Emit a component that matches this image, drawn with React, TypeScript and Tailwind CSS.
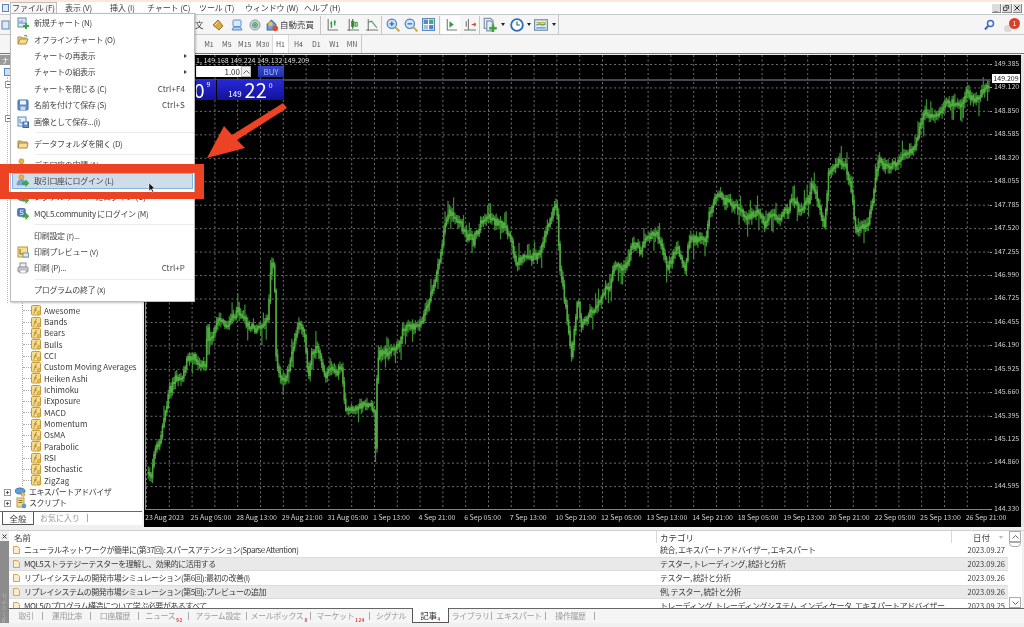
import React, { useMemo } from "react";

const FONT = "font-['Noto_Sans_CJK_JP','Noto_Sans',sans-serif]";

const LZ: number[][] = [[10,850],[18,860],[30,780],[45,750],[55,690],[65,660],[72,590],[78,600],[90,560],[110,570],[125,510],[145,500],[170,520],[182,530],[186,400],[195,440],[215,400],[225,380],[245,400],[262,380],[285,370],[300,390],[330,410],[350,415],[370,370],[378,210],[388,230],[392,480],[400,550],[412,575],[430,550],[445,470],[462,410],[480,430],[490,570],[500,490],[515,460],[540,540],[560,530],[590,530],[600,640],[612,670],[640,650],[660,640],[688,670],[689,900],[697,500],[705,480],[735,490],[765,465],[775,410],[800,400],[830,395],[850,340],[870,270],[885,190],[900,100],[915,65],[940,100],[965,140],[985,150],[1005,100],[1025,80],[1045,80],[1075,120],[1100,170],[1110,220],[1135,190],[1150,200],[1175,200],[1200,130],[1220,60],[1235,40],[1245,230],[1255,290],[1270,420],[1280,500]];
const RZ: number[][] = [[15,760],[30,900],[50,720],[60,800],[100,760],[120,720],[150,660],[165,600],[190,620],[215,550],[240,570],[262,530],[290,530],[320,620],[350,560],[372,620],[385,530],[435,530],[445,450],[465,415],[510,430],[545,470],[600,470],[610,490],[630,450],[660,460],[695,430],[715,445],[745,410],[752,360],[790,490],[803,330],[825,290],[850,300],[870,380],[885,520],[920,500],[935,420],[950,300],[985,320],[1025,285],[1055,280],[1085,160],[1130,160],[1155,130],[1200,140],[1215,105],[1240,120],[1275,75]];
const KEYS: number[][] = [
  ...LZ.map(([x, y]) => [144 + x / 3 - 145, 190 + y / 3 - 55]),
  ...RZ.map(([x, y]) => [560 + x / 3 - 145, 60 + y / 3 - 55]),
];

function buildCandles() {
  let seed = 12345;
  const rnd = () => {
    seed = (seed * 1103515245 + 12345) & 0x7fffffff;
    return seed / 0x7fffffff;
  };
  const at = (x: number) => {
    for (let i = 1; i < KEYS.length; i++) {
      if (x <= KEYS[i][0]) {
        const [x0, y0] = KEYS[i - 1];
        const [x1, y1] = KEYS[i];
        const t = x1 === x0 ? 1 : (x - x0) / (x1 - x0);
        return y0 + (y1 - y0) * t;
      }
    }
    return KEYS[KEYS.length - 1][1];
  };
  let wick = "";
  let body = "";
  let prev = at(KEYS[0][0]);
  let drift = 0;
  for (let x = KEYS[0][0]; x <= 843; x += 1.42) {
    drift = drift * 0.8 + (rnd() - 0.5) * 5;
    const c = at(x) + drift + (rnd() - 0.5) * 5;
    const spike = rnd();
    const up = 2 + rnd() * 5 + (spike > 0.92 ? 9 : 0);
    const dn = 2 + rnd() * 5 + (spike < 0.08 ? 11 : 0);
    const top = Math.min(prev, c) - up;
    const bot = Math.max(prev, c) + dn;
    wick += `M${x.toFixed(1)} ${top.toFixed(1)}V${bot.toFixed(1)}`;
    body += `M${x.toFixed(1)} ${(Math.min(prev, c) - 1).toFixed(1)}V${(Math.max(prev, c) + 1).toFixed(1)}`;
    prev = c;
  }
  return { wick, body };
}

const PRICES = ["149.385","149.120","148.850","148.585","148.320","148.055","147.785","147.520","147.255","146.990","146.725","146.455","146.190","145.925","145.660","145.395","145.125","144.860","144.595","144.330"];
const TIMES = ["23 Aug 2023","25 Aug 05:00","28 Aug 13:00","29 Aug 21:00","31 Aug 05:00","1 Sep 13:00","4 Sep 21:00","6 Sep 05:00","7 Sep 13:00","10 Sep 21:00","12 Sep 05:00","13 Sep 13:00","14 Sep 21:00","18 Sep 05:00","19 Sep 13:00","20 Sep 21:00","22 Sep 05:00","25 Sep 13:00","26 Sep 21:00"];
const TFS = ["M1","M5","M15","M30","H1","H4","D1","W1","MN"];
const INDICATORS = ["Awesome","Bands","Bears","Bulls","CCI","Custom Moving Averages","Heiken Ashi","Ichimoku","iExposure","MACD","Momentum","OsMA","Parabolic","RSI","Stochastic","ZigZag"];

function Svg({ s = 12, children }: { s?: number; children: React.ReactNode }) {
  return <svg width={s} height={s} viewBox="0 0 12 12" className="shrink-0">{children}</svg>;
}

const IcNewChart = () => <Svg><rect x="1" y="1" width="8" height="9" fill="#dfeaf7" stroke="#5a86b8"/><path d="M3 7V4M5 7V3M7 7V5" stroke="#5a86b8"/><path d="M9 6v6M6 9h6" stroke="#3aa63a" strokeWidth="2"/></Svg>;
const IcFolderOpen = () => <Svg><path d="M1 10V3h3l1 1h4v2" fill="#f2d58a" stroke="#b08a3a"/><path d="M1 10l2-5h8l-2 5z" fill="#f7dc8e" stroke="#b08a3a"/><path d="M7 2l2-1 1 2" stroke="#3aa63a" fill="none"/></Svg>;
const IcFolder = () => <Svg><path d="M1 10V3h3l1 1h5v1" fill="#eccb7c" stroke="#a98a45"/><path d="M1 10l1-5h9l-1 5z" fill="#f6dd9a" stroke="#a98a45"/></Svg>;
const IcSave = () => <Svg><rect x="1" y="1" width="10" height="10" rx="1" fill="#5f8fc9" stroke="#3e6aa3"/><rect x="3" y="1.5" width="6" height="4" fill="#eef3fa"/><rect x="3.5" y="7.5" width="5" height="3.5" fill="#c9d7e8"/></Svg>;
const IcSaveImg = () => <Svg><rect x="1" y="1" width="8" height="9" fill="#e8f0fa" stroke="#5a86b8"/><path d="M3 3v4h3" stroke="#5a86b8" fill="none"/><rect x="6" y="6" width="5.5" height="5.5" fill="#5f8fc9" stroke="#3e6aa3"/><rect x="7.5" y="6.5" width="2.5" height="2" fill="#fff"/></Svg>;
const Person = ({ c = "#e8b24a" }: { c?: string }) => <><circle cx="5" cy="3" r="2.3" fill={c} stroke="#b5832a" strokeWidth=".5"/><path d="M1 10c0-3.5 1.5-4.5 4-4.5s4 1 4 4.5z" fill="#6fa9d8" stroke="#4f7fae" strokeWidth=".5"/></>;
const Green = () => <path d="M6 7.5h3V5.5l3 3-3 3V9.5H6z" fill="#3fae3f" stroke="#2a8a2a" strokeWidth=".4"/>;
const IcLogin = () => <Svg s={13}><Person/><Green/></Svg>;
const IcSignal = () => <Svg s={13}><circle cx="5" cy="5" r="4" fill="#4f87c9" stroke="#38689f" strokeWidth=".5"/><Green/></Svg>;
const IcMql = () => <Svg s={13}><rect x="1" y="1" width="8" height="8" rx="2" fill="#4f78b8"/><path d="M4 3h3M4 3v2h2.5v2H3.5" stroke="#fff" fill="none" strokeWidth=".7"/><Green/></Svg>;
const IcPreview = () => <Svg><rect x="1" y="1" width="9.5" height="10" fill="#f5df8c" stroke="#b59a3f"/><path d="M3 3v5h5" stroke="#7a6a30" fill="none"/><rect x="6" y="7" width="5.5" height="4" fill="#dfe8f2" stroke="#7f93a8"/></Svg>;
const IcPrint = () => <Svg><rect x="3" y="1" width="6" height="5" fill="#f0f0f0" stroke="#8c8c8c"/><rect x="1" y="5" width="10" height="5" rx="1" fill="#c9ced6" stroke="#8c8c8c"/><rect x="3" y="8" width="6" height="3" fill="#fff" stroke="#8c8c8c" strokeWidth=".6"/></Svg>;
const IcDiamond = () => <Svg><path d="M1 6l5-5 5 6-4 4z" fill="#d8aa4e" stroke="#9a7425"/><path d="M3 6l3-3" stroke="#f5dc9a"/></Svg>;
const IcMonitor = () => <Svg><rect x="2" y="1" width="8" height="6.5" rx="1" fill="#dcebfa" stroke="#5d8fc6"/><path d="M1 11l1.5-3h7L11 11z" fill="#b6cfe8" stroke="#5d8fc6"/></Svg>;
const IcRadar = () => <Svg><circle cx="6" cy="6" r="5" fill="#cfd6dd" stroke="#8a97a3"/><circle cx="6" cy="6" r="2.5" fill="#8fc98a" stroke="#5a9a55"/><circle cx="6" cy="6" r="1" fill="#3c8ecf"/></Svg>;
const IcRobot = () => <Svg s={13}><path d="M2 6l4-4 4 4v5H2z" fill="#6da3d8" stroke="#3e6fa3"/><circle cx="5" cy="5.5" r="2" fill="#f0c04a"/><circle cx="9.5" cy="9.5" r="2.6" fill="#e24a32"/></Svg>;
const IcBars = () => <Svg s={13}><path d="M2 1v10h9" stroke="#777" fill="none"/><path d="M5 3v6M8 2v5" stroke="#2f9a4f" strokeWidth="1.3"/><path d="M4 5h1M8 4h1" stroke="#2f9a4f"/></Svg>;
const IcCandle = () => <Svg s={13}><path d="M1 11h11M3 1v11" stroke="#777"/><rect x="5" y="3" width="2.5" height="5" fill="#4aa64a" stroke="#2a7a2a" strokeWidth=".5"/><path d="M6.2 1v9" stroke="#2a7a2a"/><rect x="8.5" y="4" width="2" height="4" fill="#9ad09a" stroke="#2a7a2a" strokeWidth=".5"/></Svg>;
const IcLine = () => <Svg s={13}><path d="M1 11h11M3 1v11" stroke="#777"/><path d="M3 4l3-1 5 6" stroke="#3a9a5a" fill="none"/></Svg>;
const IcZoomIn = () => <Svg s={14}><circle cx="5" cy="5" r="4" fill="#cfe3f7" stroke="#4a82bd"/><path d="M3 5h4M5 3v4" stroke="#2f6fb3" strokeWidth="1.1"/><path d="M8 8l3.5 3.5" stroke="#d6a93e" strokeWidth="1.8"/></Svg>;
const IcZoomOut = () => <Svg s={14}><circle cx="5" cy="5" r="4" fill="#cfe3f7" stroke="#4a82bd"/><path d="M3 5h4" stroke="#2f6fb3" strokeWidth="1.1"/><path d="M8 8l3.5 3.5" stroke="#d6a93e" strokeWidth="1.8"/></Svg>;
const IcTile = () => <Svg s={13}><rect x="0.5" y="0.5" width="11" height="11" fill="#fff" stroke="#5a86b8"/><rect x="1.5" y="1.5" width="4" height="4" fill="#4f87c9"/><rect x="6.5" y="1.5" width="4" height="4" fill="#4aa670"/><rect x="1.5" y="6.5" width="4" height="4" fill="#9dc0e4"/><rect x="6.5" y="6.5" width="4" height="4" fill="#4f87c9"/></Svg>;
const IcShift = () => <Svg s={13}><path d="M3 1v10h9" stroke="#777" fill="none"/><path d="M5 3l4 3-4 3z" fill="#2f9a4f"/></Svg>;
const IcAuto = () => <Svg s={13}><path d="M5 1v10M1 11h11" stroke="#777"/><path d="M8 6h3M10 4.5L12 6l-2 1.5" stroke="#c9503a" fill="none"/><path d="M3 3v5" stroke="#777"/></Svg>;
const IcNew = () => <Svg s={15}><path d="M1 1h5l2 2v6H1z" fill="#f5f5f5" stroke="#7f93a8"/><path d="M3 3h3l2 2v6H3z" fill="#e5ecf5" stroke="#7f93a8"/><path d="M8 6v6M5 9h6" stroke="#3aa63a" strokeWidth="2"/></Svg>;
const IcClock = () => <Svg s={14}><circle cx="6" cy="6" r="5" fill="#fff" stroke="#2f6fb3" strokeWidth="1.6"/><path d="M6 3v3h2.5" stroke="#2f5f93" fill="none"/></Svg>;
const IcTemplate = () => <Svg s={14}><rect x="0.5" y="1.5" width="11" height="9" fill="#dfe9f4" stroke="#6f8fb0"/><path d="M2 4h8" stroke="#d9a54a"/><path d="M2 6l3-1 2 1 3-1" stroke="#4aa64a" fill="none"/><path d="M2 8.5h8" stroke="#5a86b8"/></Svg>;
const IcSearch = () => <Svg><circle cx="7.5" cy="4.5" r="3" fill="none" stroke="#3f6fc4" strokeWidth="1.5"/><path d="M5.5 6.5L2 10.5" stroke="#3f6fc4" strokeWidth="2"/></Svg>;
const IcIndicator = () => <svg width="11" height="11" viewBox="0 0 11 11" className="shrink-0"><rect x="0.5" y="0.5" width="9" height="9.5" rx="1" fill="#f4dc8c" stroke="#c49a3e"/><path d="M6 2.5C4.5 2 4.5 4 4 6S3 8.5 2.3 8M3 5h3" stroke="#8a6a20" fill="none" strokeWidth=".7"/><circle cx="8" cy="8" r="1.8" fill="#efb840" stroke="#b9862a" strokeWidth=".5"/></svg>;
const IcEa = () => <Svg><ellipse cx="5" cy="5" rx="5" ry="3" fill="#5e9ed8" stroke="#3f74aa"/><circle cx="8" cy="8.5" r="2" fill="#f0c04a" stroke="#b98a2a" strokeWidth=".5"/></Svg>;
const IcScript = () => <Svg><rect x="2" y="1" width="7" height="9" fill="#f1dd9a" stroke="#b79a45"/><path d="M3.5 3.5h4M3.5 5.5h4" stroke="#8a7a3a"/><circle cx="9" cy="9" r="2" fill="#5e9ed8" stroke="#3f74aa" strokeWidth=".5"/></Svg>;
const IcDoc = () => <svg width="7" height="8" viewBox="0 0 7 8" className="shrink-0"><path d="M.5.5h4l2 2v5h-6z" fill="#fbeccb" stroke="#d9a04e"/></svg>;
const Chev = ({ up }: { up?: boolean }) => <svg width="7" height="4" viewBox="0 0 7 4"><path d={up ? "M.5 3.5l3-3 3 3" : "M.5.5l3 3 3-3"} stroke="#666" fill="none"/></svg>;

const Plus = () => <svg width="7" height="7" viewBox="0 0 7 7" className="shrink-0"><rect x=".5" y=".5" width="6" height="6" fill="#fff" stroke="#999"/><path d="M2 3.5h3M3.5 2v3" stroke="#555"/></svg>;
const Minus = () => <svg width="7" height="7" viewBox="0 0 7 7" className="shrink-0"><rect x=".5" y=".5" width="6" height="6" fill="#fff" stroke="#999"/><path d="M2 3.5h3" stroke="#555"/></svg>;
const Sep = ({ w }: { w: string }) => <div className={`${w} h-[18px] flex justify-center shrink-0`}><span className="w-px h-full bg-[#c4c4c4]" /></div>;
const Drop = ({ w = "w-[8px]" }: { w?: string }) => <div className={`${w} flex justify-center shrink-0`}><span className="w-0 h-0 border-x-[2.5px] border-x-transparent border-t-[3px] border-t-[#222]" /></div>;

function MenuRow({ icon, label, sc, arrow }: { icon?: React.ReactNode; label: string; sc?: string; arrow?: boolean }) {
  return (
    <div className="h-[16.4px] flex items-center relative">
      <div className="w-[23px] flex justify-center shrink-0">{icon}</div>
      <span className="whitespace-nowrap">{label}</span>
      {sc && <span className="ml-auto pr-[9px] tracking-[0.1px]">{sc}</span>}
      {arrow && <span className="ml-auto mr-[7px] w-0 h-0 border-y-[2px] border-y-transparent border-l-[3px] border-l-[#444]" />}
    </div>
  );
}
const MenuSep = ({ h }: { h: string }) => <div className={`${h} flex items-center pl-[24px]`}><span className="h-px w-full bg-[#ececec]" /></div>;

const ROWS = [
  ["ニューラルネットワークが簡単に(第37回):スパースアテンション(Sparse Attention)", "統合, エキスパートアドバイザー, エキスパート", "2023.09.27"],
  ["MQL5ストラテジーテスターを理解し、効果的に活用する", "テスター, トレーディング, 統計と分析", "2023.09.26"],
  ["リプレイシステムの開発市場シミュレーション(第6回):最初の改善(I)", "テスター, 統計と分析", "2023.09.26"],
  ["リプレイシステムの開発市場シミュレーション(第5回):プレビューの追加", "例, テスター, 統計と分析", "2023.09.26"],
  ["MQL5のプログラム構造について学ぶ必要があるすべて", "トレーディング, トレーディングシステム, インディケータ, エキスパートアドバイザー", "2023.09.25"],
];

const TABS: { t: string; s?: string; w: string; active?: boolean; nosep?: boolean }[] = [
  { t: "取引", w: "w-[34px]" },
  { t: "運用比率", w: "w-[48px]" },
  { t: "口座履歴", w: "w-[48px]" },
  { t: "ニュース", s: "92", w: "w-[50px]" },
  { t: "アラーム設定", w: "w-[58px]" },
  { t: "メールボックス", s: "8", w: "w-[64px]" },
  { t: "マーケット", s: "124", w: "w-[59px]" },
  { t: "シグナル", w: "w-[42px]", nosep: true },
  { t: "記事", s: "4", w: "w-[37px]", active: true },
  { t: "ライブラリ", w: "w-[43px]" },
  { t: "エキスパート", w: "w-[54px]" },
  { t: "操作履歴", w: "w-[49px]" },
];

export default function App() {
  const { wick, body } = useMemo(buildCandles, []);
  return (
    <div className={`relative w-[1024px] h-[627px] overflow-hidden bg-[#f0f0f0] text-[#3a3a3a] text-[8px] leading-none ${FONT} blur-[0.4px]`}>
      <div className="h-[2px] bg-[#fde6dc]" />
      {/* menu bar */}
      <div className="h-[12px] bg-white flex items-center text-[8px] whitespace-nowrap tracking-[-0.1px]">
        <div className="w-[10px] pl-[2px] shrink-0"><svg width="7" height="8" viewBox="0 0 7 8"><rect x=".5" y=".5" width="6" height="7" fill="#dfeaf7" stroke="#5a86b8"/></svg></div>
        <div className="w-[47px] h-full border border-[#bdbdbd] bg-[#f7f7f7] flex items-center justify-center shrink-0">ファイル (F)</div>
        <div className="w-[8px] shrink-0" />
        <div className="w-[45px] shrink-0">表示 (V)</div>
        <div className="w-[37px] shrink-0">挿入 (I)</div>
        <div className="w-[52px] shrink-0">チャート (C)</div>
        <div className="w-[46px] shrink-0">ツール (T)</div>
        <div className="w-[59px] shrink-0">ウィンドウ (W)</div>
        <div className="w-[40px] shrink-0">ヘルプ (H)</div>
        <div className="ml-auto flex gap-[1px] pr-[2px]">
          <span className="w-[9.5px] h-[9px] bg-[#dcdcdc] border-b border-r border-[#888] flex items-end justify-center text-[7px] text-[#333]">_</span>
          <span className="w-[9.5px] h-[9px] bg-[#dcdcdc] border-b border-r border-[#888] flex items-center justify-center"><svg width="6" height="6" viewBox="0 0 6 6"><path d="M2 .5h3.5V4M.5 2h3.5v3.5H.5z" stroke="#333" fill="none" strokeWidth=".8"/></svg></span>
          <span className="w-[9.5px] h-[9px] bg-[#dcdcdc] border-b border-r border-[#888] flex items-center justify-center"><svg width="6" height="6" viewBox="0 0 6 6"><path d="M.5.5l5 5M5.5.5l-5 5" stroke="#333"/></svg></span>
        </div>
      </div>
      {/* toolbar 1 */}
      <div className="h-[20px] bg-[#f5f5f5] border-t border-[#c8c8c8] flex items-center text-[8.5px]">
        <div className="w-[191px] pl-[1px] shrink-0"><svg width="9" height="10" viewBox="0 0 9 10"><rect x="1" y="1" width="7" height="8" fill="#dfeaf7" stroke="#5a86b8"/></svg></div>
        <div className="w-[17px] pl-[4px] shrink-0">文</div>
        <div className="w-[19px] flex justify-center shrink-0"><IcDiamond /></div>
        <div className="w-[19px] flex justify-center shrink-0"><IcMonitor /></div>
        <div className="w-[17px] flex justify-center shrink-0"><IcRadar /></div>
        <div className="w-[17px] flex justify-center shrink-0"><IcRobot /></div>
        <div className="w-[38px] shrink-0 whitespace-nowrap">自動売買</div>
        <Sep w="w-[4px]" />
        <div className="w-[20px] flex justify-center shrink-0"><IcBars /></div>
        <div className="w-[20px] flex justify-center shrink-0"><IcCandle /></div>
        <div className="w-[18px] flex justify-center shrink-0"><IcLine /></div>
        <Sep w="w-[3px]" />
        <div className="w-[19px] flex justify-center shrink-0"><IcZoomIn /></div>
        <div className="w-[18px] flex justify-center shrink-0"><IcZoomOut /></div>
        <div className="w-[17px] flex justify-center shrink-0"><IcTile /></div>
        <Sep w="w-[4px]" />
        <div className="w-[19px] h-[18px] flex items-center justify-center shrink-0 bg-white"><IcShift /></div>
        <div className="w-[18px] flex justify-center shrink-0"><IcAuto /></div>
        <Sep w="w-[3px]" />
        <div className="w-[18px] flex justify-center shrink-0"><IcNew /></div>
        <Drop />
        <div className="w-[19px] flex justify-center shrink-0"><IcClock /></div>
        <Drop w="w-[6px]" />
        <div className="w-[18px] flex justify-center shrink-0"><IcTemplate /></div>
        <Drop />
        <div className="w-px h-full bg-[#c8c8c8] shrink-0" />
        <div className="ml-auto flex items-center gap-[9px] pr-[4px]">
          <IcSearch />
          <div className="relative w-[16px] h-[14px]">
            <span className="absolute left-0 bottom-0 w-[8px] h-[7px] rounded-full bg-[#dadada]" />
            <span className="absolute right-0 top-0 w-[11px] h-[11px] rounded-full bg-[#d8402a] text-white text-[7px] flex items-center justify-center">1</span>
          </div>
        </div>
      </div>
      {/* toolbar 2 */}
      <div className="h-[19px] bg-[#f5f5f5] border-t border-[#c8c8c8] flex items-stretch text-[7px] text-[#555]">
        <div className="w-[200px] shrink-0" />
        <div className="flex">
          {TFS.map((t) => (
            <div key={t} className={`w-[17.9px] flex items-center justify-center ${t === "H1" ? "bg-white border-x border-[#dcdcdc]" : ""}`}>{t}</div>
          ))}
        </div>
        <div className="w-px bg-[#c8c8c8]" />
      </div>
      <div className="h-[1px] bg-[#777]" />
      <div className="h-[1px] bg-[#f0f0f0]" />

      {/* middle */}
      <div className="h-[472px] flex">
        {/* navigator */}
        <div className="w-[142px] h-full bg-white flex flex-col text-[8px] shrink-0">
          <div className="h-[10px] bg-[#9a9a9a] text-white text-[7px] flex items-center pl-[2px]">ナ</div>
          <div className="h-[3px]" />
          <div className="h-[9px] pl-[4px]"><svg width="7" height="8" viewBox="0 0 7 8"><rect x=".5" y=".5" width="6" height="7" fill="#cfe0f2" stroke="#5a86b8"/></svg></div>
          <div className="flex-1 min-h-0 flex flex-col justify-end">
            <div className="flex-1 ml-[7px] border-l border-dotted border-[#bbb] flex flex-col">
              <div className="h-[4px]" />
              <div className="-ml-[3.5px]"><Minus /></div>
              <div className="h-[27px]" />
              <div className="-ml-[3.5px]"><Minus /></div>
            </div>
            <div className="ml-[22px] border-l border-dotted border-[#aaa] pt-[2px]">
              {INDICATORS.map((n) => (
                <div key={n} className="h-[11.33px] flex items-center">
                  <span className="w-[8px] border-t border-dotted border-[#aaa] shrink-0" />
                  <IcIndicator />
                  <span className="ml-[2px] whitespace-nowrap">{n}</span>
                </div>
              ))}
            </div>
            <div className="h-[11.33px] flex items-center pl-[4px]"><Plus /><span className="w-[4px]" /><IcEa /><span className="ml-[2px] whitespace-nowrap tracking-[-0.5px]">エキスパートアドバイザ</span></div>
            <div className="h-[11.33px] flex items-center pl-[4px]"><Plus /><span className="w-[4px]" /><IcScript /><span className="ml-[2px] whitespace-nowrap tracking-[-0.5px]">スクリプト</span></div>
            <div className="h-[2px]" />
          </div>
          <div className="h-[14px] border-t border-[#666] flex items-start text-[8.5px]">
            <div className="ml-[2px] w-[32px] h-[13px] bg-white border-x border-b border-[#555] flex items-center justify-center">全般</div>
            <div className="ml-[6px] h-[11px] flex items-center text-[#999] text-[8px]">お気に入り</div>
            <div className="ml-[7px] mt-[2px] h-[8px] w-px bg-[#aaa]" />
          </div>
          <div className="h-[2px] bg-[#f0f0f0]" />
        </div>
        <div className="w-[2px] bg-[#f0f0f0] shrink-0" />

        {/* chart */}
        <div className="w-[877px] h-full bg-black flex flex-col text-[7px] text-[#cfcfcf] shrink-0">
          <div className="flex h-[455px]">
            <div className="relative w-[845px] h-full ml-[1px] border-l border-b border-[#8a8a8a]">
              <svg width="845" height="455" viewBox="0 0 845 455" className="block">
                <g stroke="#6e6e6e" strokeWidth="1" strokeDasharray="2 2.5">
                  {Array.from({ length: 37 }, (_, i) => <line key={i} x1={0.5 + 22.8 * i} y1="0" x2={0.5 + 22.8 * i} y2="455" />)}
                  {Array.from({ length: 20 }, (_, i) => <line key={i} x1="0" y1={9.5 + 23.45 * i} x2="845" y2={9.5 + 23.45 * i} />)}
                </g>
                <path d={wick} stroke="#3a8f30" strokeWidth="1.2" fill="none" />
                <path d={body} stroke="#52ab40" strokeWidth="1.5" fill="none" />
                <line x1="0" y1="25" x2="845" y2="25" stroke="#5a5e66" strokeWidth="1.4" />
              </svg>
              <div className="absolute left-[50px] top-[2px] text-[7px] text-[#ddd] whitespace-nowrap">1, 149.168 149.224 149.132 149.209</div>
              <div className="absolute left-[50px] top-[11px] w-[88px] flex flex-col">
                <div className="flex h-[11px] items-stretch">
                  <div className="w-[45px] bg-white text-[#333] text-[8px] flex items-center justify-end pr-[1px]">1.00</div>
                  <div className="w-[10px] bg-[#f0f0f0] border border-[#bbb] flex items-center justify-center"><Chev up /></div>
                  <div className="w-[7px]" />
                  <div className="w-[26px] bg-gradient-to-b from-[#3a48c8] to-[#2030b0] text-[#a8b8f0] text-[8px] flex items-center justify-center">BUY</div>
                </div>
                <div className="h-[3px]" />
                <div className="flex h-[20px]">
                  <div className="w-[20px] bg-gradient-to-b from-[#2828d8] to-[#12129a] text-white flex items-start overflow-hidden">
                    <span className="text-[19px] leading-[20px] -ml-[2px]">0</span>
                    <span className="text-[7px] leading-[8px] ml-[2px]">9</span>
                  </div>
                  <div className="w-[1px] bg-black" />
                  <div className="w-[67px] bg-gradient-to-b from-[#2828d8] to-[#12129a] text-white flex items-end justify-center">
                    <span className="text-[8px] mb-[2px] mr-[3px]">149</span>
                    <span className="text-[20px] leading-[20px]">22</span>
                    <span className="text-[7px] self-start mt-[2px] ml-[2px]">0</span>
                  </div>
                </div>
              </div>
            </div>
            <div className="flex-1 relative pt-[5px]">
              {PRICES.map((p) => (
                <div key={p} className="h-[23.45px] flex items-start whitespace-nowrap">
                  <span className="w-[2px] h-px bg-[#999] mt-[4px] mr-[2px]" />{p}
                </div>
              ))}
              <div className="absolute left-[2px] top-[19px] w-[28px] h-[9px] bg-white text-[#222] flex items-center justify-center">149.209</div>
            </div>
          </div>
          <div className="flex h-[17px] ml-[1px] pt-[4px]">
            {TIMES.map((t) => (
              <div key={t} className="w-[45.6px] shrink-0 whitespace-nowrap">{t}</div>
            ))}
          </div>
        </div>
        <div className="flex-1 bg-[#e4e4e4]" />
      </div>
      <div className="h-[3px]" />

      {/* bottom */}
      <div className="h-[97px] flex border-t border-[#cfcfcf] bg-[#f0f0f0]">
        <div className="w-[9px] flex flex-col shrink-0">
          <div className="h-[10px] flex items-center justify-center"><svg width="5" height="5" viewBox="0 0 5 5"><path d="M.5.5l4 4M4.5.5l-4 4" stroke="#333"/></svg></div>
          <div className="h-[82px] bg-[#8c8c8c] text-[#b5b5b5] text-[6px] [writing-mode:vertical-rl] rotate-180 flex items-center">ターミナル</div>
        </div>
        <div className="flex-1 flex flex-col min-w-0">
          <div className="h-[77px] flex overflow-hidden">
            <div className="w-[999px] flex flex-col text-[8px] shrink-0 bg-white">
              <div className="h-[12px] flex items-center shrink-0 text-[8.5px]">
                <div className="w-[648px] pl-[5px] border-r border-[#d8d8d8] h-full flex items-center">名前</div>
                <div className="w-[295px] pl-[3px] border-r border-[#d8d8d8] h-full flex items-center">カテゴリ</div>
                <div className="flex-1 flex items-center pl-[21px]">日付<span className="ml-[9px] w-0 h-0 border-x-[2.5px] border-x-transparent border-t-[3px] border-t-[#bbb]" /></div>
              </div>
              {ROWS.map((r, i) => (
                <div key={i} className={`h-[14px] flex items-center shrink-0 whitespace-nowrap tracking-[-0.5px] ${i % 2 ? "bg-[#e9e9e9] border-y border-[#dcdcdc]" : "bg-white"}`}>
                  <div className="w-[648px] pl-[4px] flex items-center"><IcDoc /><span className="ml-[4px]">{r[0]}</span></div>
                  <div className="w-[295px] pl-[3px]">{r[1]}</div>
                  <div className="flex-1 text-right pr-[3px] text-[7.5px] tracking-normal">{r[2]}</div>
                </div>
              ))}
            </div>
            <div className="w-[14px] bg-white flex flex-col items-center shrink-0">
              <div className="w-[12px] h-[11px] border border-[#aaa] flex items-center justify-center"><Chev up /></div>
              <div className="w-[12px] h-[5px] border border-[#aaa] rounded-b-sm" />
              <div className="flex-1" />
              <div className="w-[12px] h-[11px] border border-[#aaa] flex items-center justify-center"><Chev /></div>
            </div>
          </div>
          <div className="h-[15px] border-t border-[#666] flex items-start text-[8px] text-[#999] bg-[#f5f5f5] tracking-[-0.4px]">
            {TABS.map((t) => (
              <div key={t.t} className={`${t.w} flex items-center justify-center shrink-0 whitespace-nowrap relative ${t.active ? "h-[15px] -mt-px bg-white border-x border-b border-[#555] text-[#333] text-[8.5px]" : "h-[14px]"}`}>
                {t.t}
                {t.s && <span className="text-[4.5px] text-[#d33] self-end mb-[1px] ml-[1px] font-bold tracking-[0.5px]">{t.s}</span>}
                {!t.active && !t.nosep && <span className="absolute right-0 top-[3px] h-[8px] w-px bg-[#aaa]" />}
              </div>
            ))}
          </div>
        </div>
      </div>

      {/* file menu */}
      <div className="absolute left-[10px] top-[13px] w-[185px] h-[289px] bg-white border border-[#bcbcbc] shadow-[1px_1px_2px_rgba(0,0,0,0.25)] pt-[1px] text-[8px] tracking-[-0.3px] text-[#444]">
        <MenuRow icon={<IcNewChart />} label="新規チャート (N)" />
        <MenuRow icon={<IcFolderOpen />} label="オフラインチャート (O)" />
        <MenuRow label="チャートの再表示" arrow />
        <MenuRow label="チャートの組表示" arrow />
        <MenuRow label="チャートを閉じる (C)" sc="Ctrl+F4" />
        <MenuRow icon={<IcSave />} label="名前を付けて保存 (S)" sc="Ctrl+S" />
        <MenuRow icon={<IcSaveImg />} label="画像として保存...(i)" />
        <MenuSep h="h-[5.6px]" />
        <MenuRow icon={<IcFolder />} label="データフォルダを開く (D)" />
        <MenuSep h="h-[4.6px]" />
        <MenuRow icon={<IcLogin />} label="デモ口座の申請 (A)" />
        <div className="mx-[1px] h-[16.4px] bg-[#cfdcea] border border-[#7fb4e8]"><div className="-mt-px -ml-[2px]"><MenuRow icon={<IcLogin />} label="取引口座にログイン (L)" /></div></div>
        <MenuRow icon={<IcSignal />} label="シグナルサーバーにログイン (G)" />
        <MenuRow icon={<IcMql />} label="MQL5.community にログイン (M)" />
        <MenuSep h="h-[5.6px]" />
        <MenuRow label="印刷設定 (r)..." />
        <MenuRow icon={<IcPreview />} label="印刷プレビュー (v)" />
        <MenuRow icon={<IcPrint />} label="印刷 (P)..." sc="Ctrl+P" />
        <MenuSep h="h-[5.6px]" />
        <MenuRow label="プログラムの終了 (x)" />
      </div>

      {/* annotation */}
      <div className="absolute left-0 top-[164px] w-[204px] h-[35px] border-x-[9px] border-t-[9px] border-b-[7px] border-[#ec4324]" />
      <svg className="absolute left-0 top-0 pointer-events-none" width="1024" height="627" viewBox="0 0 1024 627">
        <polygon points="283,103 287,108 237,140 245,148 207,158 224,126 232,135" fill="#ec4324" />
        <path d="M149 183v8l2-1.8 1.4 3 1.2-.6-1.4-2.8 2.6-.2z" fill="#111" stroke="#fff" strokeWidth=".5" />
      </svg>
    </div>
  );
}
